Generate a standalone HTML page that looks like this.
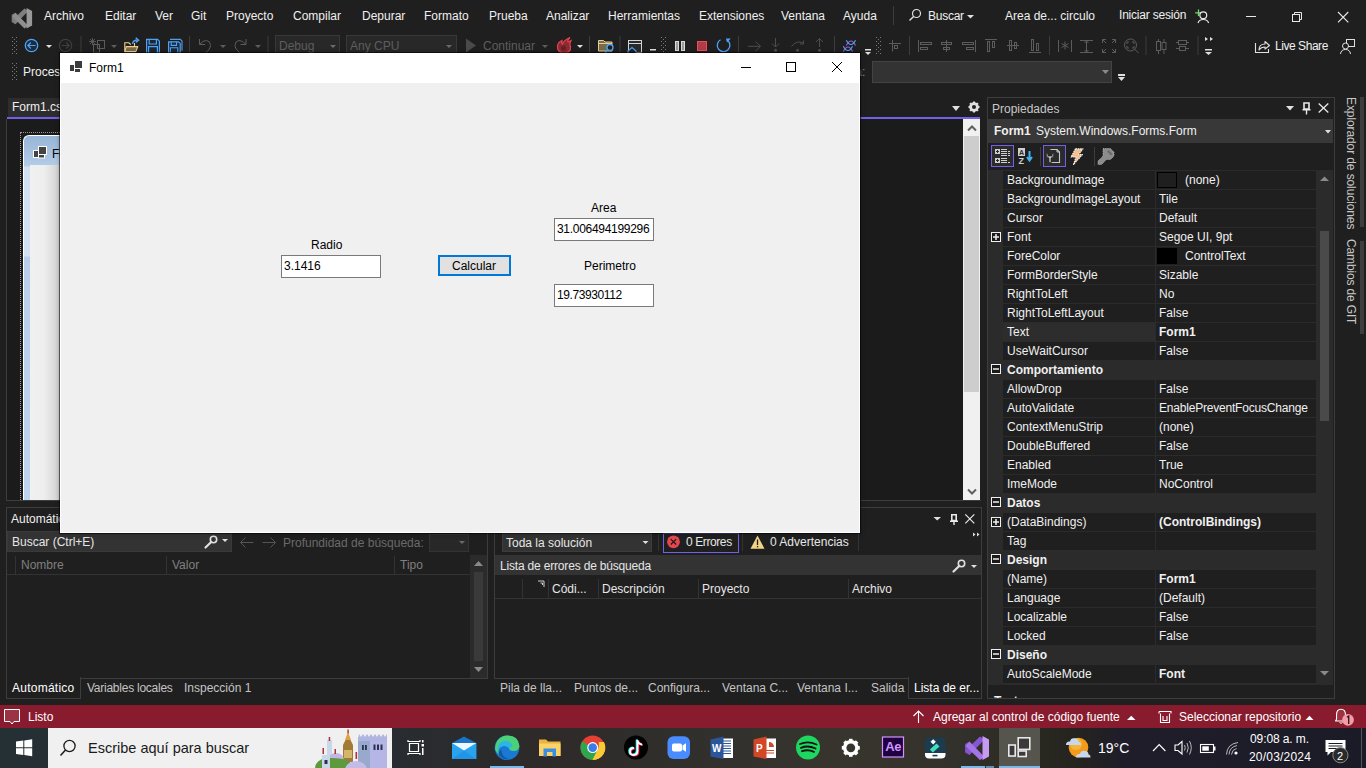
<!DOCTYPE html>
<html><head><meta charset="utf-8">
<style>
*{box-sizing:border-box}
html,body{margin:0;padding:0}
body{width:1366px;height:768px;overflow:hidden;position:relative;background:#1f1f1f;font-family:"Liberation Sans",sans-serif;font-size:12px;color:#f0f0f0}
.a{position:absolute}
.t{position:absolute;white-space:nowrap;font-size:12px;line-height:14px}
.g{color:#6f6f6f}
.sep{position:absolute;width:1px;background:#3d3d3d}
.grip{position:absolute;width:5px;background-image:radial-gradient(circle,#6a6a6a 0.7px,transparent 0.8px);background-size:2.5px 3px}
svg{position:absolute;overflow:visible}
</style></head><body>

<!-- ===== TITLE / MENU BAR ===== -->
<div id="menubar">
<svg style="left:0;top:0" width="40" height="32" viewBox="0 0 40 32"><g transform="translate(11.7,8) scale(0.85) translate(-965,-736)">
<path d="M965 744 L969.5 741.5 V755 L965 752.5 Z" fill="#7c7c7c"/>
<path d="M965.5 750.5 L969.5 755 L984.5 739.5 L980 736.5 Z" fill="#7e7e7e"/>
<path d="M965.5 746 L969.5 741.5 L984.5 757 L980 760 Z" fill="#8e8e8e"/>
<path d="M982.5 736 L989 739.5 V756.5 L982.5 760 Z" fill="#999"/></g></svg>
<div class="t" style="left:44px;top:9px">Archivo</div>
<div class="t" style="left:105px;top:9px">Editar</div>
<div class="t" style="left:155px;top:9px">Ver</div>
<div class="t" style="left:191px;top:9px">Git</div>
<div class="t" style="left:226px;top:9px">Proyecto</div>
<div class="t" style="left:293px;top:9px">Compilar</div>
<div class="t" style="left:362px;top:9px">Depurar</div>
<div class="t" style="left:424px;top:9px">Formato</div>
<div class="t" style="left:489px;top:9px">Prueba</div>
<div class="t" style="left:546px;top:9px">Analizar</div>
<div class="t" style="left:608px;top:9px">Herramientas</div>
<div class="t" style="left:699px;top:9px">Extensiones</div>
<div class="t" style="left:781px;top:9px">Ventana</div>
<div class="t" style="left:843px;top:9px">Ayuda</div>
<div class="sep" style="left:893px;top:6px;height:19px"></div>
<svg style="left:908px;top:8px" width="14" height="14" viewBox="0 0 14 14"><circle cx="8.5" cy="5.5" r="4" fill="none" stroke="#e0e0e0" stroke-width="1.2"/><path d="M5.6 8.4 L1.5 12.5" stroke="#e0e0e0" stroke-width="1.4"/></svg>
<div class="t" style="left:928px;top:9px;letter-spacing:-0.25px">Buscar</div>
<svg style="left:967px;top:15px" width="7" height="4"><path d="M0 0 L7 0 L3.5 3.5Z" fill="#e0e0e0"/></svg>
<div class="t" style="left:1005px;top:9px">Area de... circulo</div>
<div class="t" style="left:1119px;top:8px;letter-spacing:-0.2px">Iniciar sesión</div>
<svg style="left:0;top:0" width="1366" height="32" viewBox="0 0 1366 32"><path d="M1198.5 9.5 V16 M1195.2 12.8 H1201.8" stroke="#6fdc6f" stroke-width="1.3"/><circle cx="1203.3" cy="15.3" r="3.4" fill="#1f1f1f" stroke="#e8e8e8" stroke-width="1.2"/><path d="M1198 23 Q1199 19.5 1203.3 19.5 Q1207.6 19.5 1208.6 23" fill="none" stroke="#e8e8e8" stroke-width="1.2"/><rect x="1246" y="16" width="10" height="1" fill="#e8e8e8"/><rect x="1292.5" y="14.5" width="7" height="7" fill="none" stroke="#e8e8e8"/><path d="M1294.5 14.5 V12.5 H1301.5 V19.5 H1299.5" fill="none" stroke="#e8e8e8"/><path d="M1338 12 L1348.3 22.3 M1348.3 12 L1338 22.3" stroke="#e8e8e8" stroke-width="1.1"/></svg>


</div>

<!-- ===== TOOLBAR 1 ===== -->
<div id="tb1">
<svg style="left:0;top:0" width="1366" height="60" viewBox="0 0 1366 60">

<g transform="translate(12,37)"><g fill="#7a7a7a"><rect x="0" y="0" width="1" height="1"/><rect x="4" y="0" width="1" height="1"/><rect x="2" y="2" width="1" height="1"/><rect x="0" y="4" width="1" height="1"/><rect x="4" y="4" width="1" height="1"/><rect x="2" y="6" width="1" height="1"/><rect x="0" y="8" width="1" height="1"/><rect x="4" y="8" width="1" height="1"/><rect x="2" y="10" width="1" height="1"/><rect x="0" y="12" width="1" height="1"/><rect x="4" y="12" width="1" height="1"/><rect x="2" y="14" width="1" height="1"/><rect x="0" y="16" width="1" height="1"/><rect x="4" y="16" width="1" height="1"/></g></g>
<!-- back -->
<circle cx="31.5" cy="45.5" r="6.2" fill="#1d2b3a" stroke="#4da3f7" stroke-width="1.3"/>
<path d="M35.5 45.5 H28 M30.8 42.5 L27.8 45.5 L30.8 48.5" fill="none" stroke="#4da3f7" stroke-width="1.2"/>
<path d="M46 45 H52 L49 48 Z" fill="#e0e0e0"/>
<circle cx="65.5" cy="45.5" r="6.2" fill="none" stroke="#3e3e3e" stroke-width="1.2"/>
<path d="M61.5 45.5 H69 M66.2 42.5 L69.2 45.5 L66.2 48.5" fill="none" stroke="#3e3e3e" stroke-width="1.2"/>
<rect x="80.5" y="36" width="1" height="17" fill="#3d3d3d"/>
<!-- new project -->
<path d="M92.5 38 V45 M89 41.5 H96 M90 39 L95 44 M95 39 L90 44" stroke="#5c5c5c" stroke-width="0.9"/>
<rect x="97.5" y="40.5" width="7" height="8" fill="none" stroke="#5c5c5c"/>
<rect x="93.5" y="44.5" width="6" height="8" fill="none" stroke="#5c5c5c"/>
<path d="M111 45 H117 L114 48 Z" fill="#5c5c5c"/>
<!-- open folder -->
<path d="M126 47 H137.5 L135.5 51.5 H125 Z" fill="#7b6c4a"/>
<path d="M124.8 52 V42.8 H128.8 L130.3 44.2 H131" fill="none" stroke="#efd18e" stroke-width="1.1"/>
<path d="M124.8 51.6 H135.8 L137.8 46.6 H126.2 L124.8 51.6" fill="none" stroke="#efd18e" stroke-width="1.1" stroke-linejoin="round"/>
<path d="M134.5 43 V46.5" stroke="#efd18e" stroke-width="1.1"/>
<path d="M132.5 43.8 Q133 40.3 137 40" fill="none" stroke="#4da3f7" stroke-width="1.5"/>
<path d="M135.7 37.8 L138.6 40.2 L135.7 42.4" fill="none" stroke="#4da3f7" stroke-width="1.4"/>
<!-- save -->
<path d="M146.6 53 V39.4 H157.6 L159.4 41.2 V53" fill="#1d2633" stroke="#4da3f7" stroke-width="1.2"/>
<path d="M149.2 39.4 V44 H156.4 V39.4" fill="none" stroke="#4da3f7" stroke-width="1.2"/>
<path d="M148.6 53 V46.6 H157.4 V53" fill="#1d2633" stroke="#4da3f7" stroke-width="1.2"/>
<path d="M170 39.4 H180.3 L182 41.1 V50.8" fill="none" stroke="#4e9de8" stroke-width="1.1"/>
<path d="M168.6 53 V41.8 H178.6 L180.2 43.4 V53" fill="#1d2633" stroke="#4da3f7" stroke-width="1.2"/>
<path d="M171.2 41.8 V45.4 H176.6 V41.8" fill="none" stroke="#4da3f7" stroke-width="1.1"/>
<path d="M170.4 53 V47.8 H177.8 V53" fill="#1d2633" stroke="#4da3f7" stroke-width="1.1"/>
<rect x="189" y="36" width="1" height="17" fill="#3d3d3d"/>
<!-- undo -->
<path d="M199.5 39 V44.5 H205 M200 44 Q203 40.5 206.5 40.5 Q210.5 41 210.5 45.5 Q210.5 48 208 50.5 L204.5 54" fill="none" stroke="#5c5c5c" stroke-width="1"/>
<path d="M220 45 H226 L223 48 Z" fill="#5c5c5c"/>
<path d="M246 39 V44.5 H240.5 M245.5 44 Q242.5 40.5 239 40.5 Q235 41 235 45.5 Q235 48 237.5 50.5 L241 54" fill="none" stroke="#5c5c5c" stroke-width="1"/>
<path d="M255 45 H261 L258 48 Z" fill="#5c5c5c"/>
<rect x="267.5" y="36" width="1" height="17" fill="#3d3d3d"/>
<!-- combos -->
<rect x="275.5" y="35.5" width="64" height="22" fill="#282828" stroke="#383838"/>
<text x="279" y="50" font-family="Liberation Sans" font-size="12" fill="#5e5e5e">Debug</text>
<path d="M330 45 H336 L333 48 Z" fill="#6a6a6a"/>
<rect x="346.5" y="35.5" width="110" height="22" fill="#282828" stroke="#383838"/>
<text x="350" y="50" font-family="Liberation Sans" font-size="12" fill="#5e5e5e">Any CPU</text>
<path d="M446 45 H452 L449 48 Z" fill="#6a6a6a"/>
<!-- continue -->
<path d="M466 38.5 L476 45.5 L466 52.5 Z" fill="#4a4a4a"/>
<text x="483" y="50" font-family="Liberation Sans" font-size="12" fill="#5e5e5e">Continuar</text>
<path d="M542 45 H548 L545 48 Z" fill="#5c5c5c"/>
<!-- flame -->
<path d="M563 53 Q557 52 557.5 46 Q558 42 562 40.5 Q561 43 562.5 44 Q564 40 570 37.5 Q567 40.5 568 42 Q569.5 41 571 40.5 Q569 44 570.5 47 Q571 52 565 53 Z" fill="#8c2a33" stroke="#e5434f" stroke-width="1.2"/>
<circle cx="563.5" cy="48" r="2.5" fill="#6a1e26"/>
<path d="M577 45 H583 L580 48 Z" fill="#e0e0e0"/>
<rect x="589" y="36" width="1" height="17" fill="#3d3d3d"/>
<!-- folder magnifier -->
<path d="M598.5 51 V40.5 H603.5 L605 42 H612 V51 Z" fill="#786a4a" stroke="#e9cd8d"/>
<path d="M598.5 43.5 H612" stroke="#e9cd8d"/>
<circle cx="610" cy="47.5" r="3" fill="#1f1f1f" stroke="#4da3f7" stroke-width="1.3"/>
<path d="M608 49.5 L605 53" stroke="#4da3f7" stroke-width="1.4"/>
<rect x="619.5" y="36" width="1" height="17" fill="#3d3d3d"/>
<!-- window icon -->
<rect x="628.5" y="40.5" width="13" height="12" fill="#2a2a2a" stroke="#d4d4d4"/>
<path d="M628.5 43.5 H641.5" stroke="#d4d4d4"/>
<path d="M628 51 L632 47.5 L636 51 V54 H628 Z" fill="#1f1f1f" stroke="#4da3f7" stroke-width="1.2"/>
<rect x="650" y="49" width="6" height="1.5" fill="#e0e0e0"/>
<g transform="translate(661,37)"><g fill="#7a7a7a"><rect x="0" y="0" width="1" height="1"/><rect x="4" y="0" width="1" height="1"/><rect x="2" y="2" width="1" height="1"/><rect x="0" y="4" width="1" height="1"/><rect x="4" y="4" width="1" height="1"/><rect x="2" y="6" width="1" height="1"/><rect x="0" y="8" width="1" height="1"/><rect x="4" y="8" width="1" height="1"/><rect x="2" y="10" width="1" height="1"/><rect x="0" y="12" width="1" height="1"/><rect x="4" y="12" width="1" height="1"/><rect x="2" y="14" width="1" height="1"/><rect x="0" y="16" width="1" height="1"/><rect x="4" y="16" width="1" height="1"/></g></g>
<!-- pause stop restart -->
<rect x="675.5" y="41.5" width="3" height="9" fill="#9a9a9a" stroke="#dcdcdc"/>
<rect x="681.5" y="41.5" width="3" height="9" fill="#9a9a9a" stroke="#dcdcdc"/>
<rect x="697.5" y="41.5" width="9" height="9" fill="#b23b47" stroke="#f04b5a"/>
<path d="M720.5 39.8 A6.3 6.3 0 1 0 727 40" fill="none" stroke="#4da3f7" stroke-width="1.3"/>
<path d="M726 38.5 L730.8 38.5 L727 42.5 Z" fill="#4da3f7"/>
<rect x="738" y="36" width="1" height="17" fill="#3d3d3d"/>
<!-- step -->
<path d="M748 46.3 H760.5 M755.5 41.5 L760.5 46.3 L755.5 51" fill="none" stroke="#4d4d4d" stroke-width="1"/>
<path d="M775.5 38 V47 M772 43.5 L775.5 47 L779 43.5" fill="none" stroke="#4d4d4d" stroke-width="1"/>
<circle cx="775.5" cy="50.3" r="1.5" fill="#4d4d4d"/>
<path d="M791.5 46.5 Q796 40 803 43 M803.5 40.5 V44 H800" fill="none" stroke="#4d4d4d" stroke-width="1"/>
<circle cx="797.5" cy="50.3" r="1.5" fill="#4d4d4d"/>
<path d="M819.5 47 V38.5 M816 42 L819.5 38.5 L823 42" fill="none" stroke="#4d4d4d" stroke-width="1"/>
<circle cx="819.5" cy="50.3" r="1.5" fill="#4d4d4d"/>
<rect x="834" y="36" width="1" height="17" fill="#3d3d3d"/>
<!-- dna -->
<path d="M846.3 45.5 Q851 36.5 855.5 45.5" fill="none" stroke="#a15ad6" stroke-width="1.2"/>
<path d="M846.3 40.2 Q851 48.8 855.5 40.2" fill="none" stroke="#4da3f7" stroke-width="1.2"/>
<path d="M843.3 51.5 Q848 42.5 852.5 51.5" fill="none" stroke="#a15ad6" stroke-width="1.2"/>
<path d="M843.3 46.3 Q848 54.7 852.5 46.3" fill="none" stroke="#4da3f7" stroke-width="1.2"/>
<rect x="865" y="49" width="6" height="1.5" fill="#e0e0e0"/>
<path d="M865 52 H871 L868 55 Z" fill="#e0e0e0"/>
<g transform="translate(876,37)"><g fill="#7a7a7a"><rect x="0" y="0" width="1" height="1"/><rect x="4" y="0" width="1" height="1"/><rect x="2" y="2" width="1" height="1"/><rect x="0" y="4" width="1" height="1"/><rect x="4" y="4" width="1" height="1"/><rect x="2" y="6" width="1" height="1"/><rect x="0" y="8" width="1" height="1"/><rect x="4" y="8" width="1" height="1"/><rect x="2" y="10" width="1" height="1"/><rect x="0" y="12" width="1" height="1"/><rect x="4" y="12" width="1" height="1"/><rect x="2" y="14" width="1" height="1"/><rect x="0" y="16" width="1" height="1"/><rect x="4" y="16" width="1" height="1"/></g></g>
<!-- align icons -->
<g fill="none" stroke="#5c5c5c" stroke-width="1">
<path d="M889 43.5 H901 M892.5 40 V51.5"/><rect x="894.5" y="45.5" width="3" height="3"/>
<path d="M918.5 40 V52"/><rect x="920.5" y="42.5" width="11" height="2"/><rect x="920.5" y="47.5" width="7" height="2"/>
<path d="M946.5 40 V52"/><rect x="941.5" y="42.5" width="10" height="2"/><rect x="943.5" y="47.5" width="6" height="2"/>
<path d="M975.5 40 V52"/><rect x="962.5" y="42.5" width="11" height="2"/><rect x="966.5" y="47.5" width="7" height="2"/>
<path d="M985 39.5 H997"/><rect x="987.5" y="41.5" width="2" height="10"/><rect x="992.5" y="41.5" width="2" height="6"/>
<path d="M1007 45.5 H1019"/><rect x="1009.5" y="40.5" width="2" height="10"/><rect x="1014.5" y="42.5" width="2" height="6"/>
<path d="M1029 52.5 H1041"/><rect x="1031.5" y="39.5" width="2" height="11"/><rect x="1036.5" y="43.5" width="2" height="7"/>
<path d="M1058.5 40 V52 M1071.5 40 V52 M1065 41.5 V49.5 M1061.5 43.5 L1068.5 47.5 M1068.5 43.5 L1061.5 47.5"/>
<path d="M1080 40.5 H1093 M1080 52.5 H1093 M1086.5 41 V52 M1084.5 43 L1086.5 41 L1088.5 43 M1084.5 50 L1086.5 52 L1088.5 50"/>
<path d="M1102.5 43 V39.5 H1106 M1102.5 39.5 L1106 43 M1115.5 43 V39.5 H1112 M1115.5 39.5 L1112 43 M1102.5 49 V52.5 H1106 M1102.5 52.5 L1106 49 M1115.5 49 V52.5 H1112 M1115.5 52.5 L1112 49"/>
<circle cx="1130.5" cy="45" r="6"/><path d="M1134.5 49 L1138.5 53"/>
<path d="M1127 44 V42 H1129 M1132 42 H1134 V44 M1134 46 V48 H1132 M1129 48 H1127 V46"/>
<path d="M1158.5 39 V54 M1164 39 V54"/><rect x="1156.5" y="41.5" width="4" height="9" fill="#1f1f1f"/><rect x="1162" y="42.5" width="4" height="7" fill="#1f1f1f"/>
<path d="M1176 42.5 H1189 M1176 48.5 H1189"/><rect x="1178.5" y="40.5" width="8" height="4" fill="#1f1f1f"/><rect x="1179.5" y="46.5" width="6" height="4" fill="#1f1f1f"/>
</g>
<rect x="1049" y="36" width="1" height="19" fill="#3d3d3d"/>
<rect x="1145.5" y="36" width="1" height="19" fill="#3d3d3d"/>
<rect x="1197.5" y="36" width="1" height="19" fill="#3d3d3d"/>
<rect x="909" y="36" width="1" height="19" fill="#3d3d3d"/>
<path d="M1205 37 L1208 39 L1205 41 Z M1210 37 L1213 39 L1210 41 Z" fill="#e0e0e0"/>
<rect x="1205" y="49" width="7" height="1.5" fill="#e0e0e0"/>
<path d="M1205 52 H1212 L1208.5 55 Z" fill="#e0e0e0"/>
<!-- live share -->
<path d="M1255.5 43 V52.5 H1268.5 V49" fill="none" stroke="#e0e0e0" stroke-width="1.1"/>
<path d="M1259 50 Q1259 44 1265 44 V41.5 L1269.5 45.5 L1265 49 V47 Q1261 47 1259 50 Z" fill="none" stroke="#e0e0e0" stroke-width="1.1" stroke-linejoin="round"/>
<!-- feedback -->
<rect x="1346.5" y="39.5" width="8" height="7" fill="none" stroke="#e0e0e0"/>
<circle cx="1345.5" cy="46" r="3" fill="#1f1f1f" stroke="#e0e0e0"/>
<path d="M1340.5 54 Q1341 49.5 1345.5 49.5 Q1350 49.5 1350.5 54" fill="none" stroke="#e0e0e0"/>
</svg>
<div class="t" style="left:1275px;top:39px;font-size:12px;letter-spacing:-0.45px">Live Share</div>
</div>

<!-- ===== TOOLBAR 2 ===== -->
<div id="tb2">
<svg style="left:0;top:0" width="30" height="90"><g transform="translate(12,63)"><g fill="#7a7a7a"><rect x="0" y="0" width="1" height="1"/><rect x="4" y="0" width="1" height="1"/><rect x="2" y="2" width="1" height="1"/><rect x="0" y="4" width="1" height="1"/><rect x="4" y="4" width="1" height="1"/><rect x="2" y="6" width="1" height="1"/><rect x="0" y="8" width="1" height="1"/><rect x="4" y="8" width="1" height="1"/><rect x="2" y="10" width="1" height="1"/><rect x="0" y="12" width="1" height="1"/><rect x="4" y="12" width="1" height="1"/><rect x="2" y="14" width="1" height="1"/><rect x="0" y="16" width="1" height="1"/><rect x="4" y="16" width="1" height="1"/></g></g></svg>
<div class="t" style="left:23px;top:65px">Proceso:</div>
<div class="t" style="left:790px;top:65px;color:#8a8a8a">Marco de pila:</div>
<div class="a" style="left:872px;top:61px;width:240px;height:22px;background:#333333;border:1px solid #434343"></div>
<svg style="left:1102px;top:70px" width="7" height="4"><path d="M0 0 L7 0 L3.5 4Z" fill="#8a8a8a"/></svg>
<div class="a" style="left:1118px;top:74px;width:7px;height:1.5px;background:#e0e0e0"></div>
<svg style="left:1118px;top:77px" width="7" height="4"><path d="M0 0 L7 0 L3.5 4Z" fill="#e0e0e0"/></svg>
</div>

<!-- ===== DOCUMENT WELL ===== -->
<div id="docwell">
<div class="a" style="left:8px;top:98px;width:56px;height:19px;background:#2d2d2d"></div>
<div class="t" style="left:12px;top:100px">Form1.cs [Diseño]</div>
<div class="a" style="left:7px;top:117px;width:973px;height:2px;background:#7160e8"></div>
<svg style="left:952px;top:106px" width="8" height="5"><path d="M0 0 L8 0 L4 5Z" fill="#e0e0e0"/></svg>
<svg style="left:968px;top:101px" width="12" height="12" viewBox="0 0 12 12"><g transform="translate(6,6)"><circle r="3.6" fill="none" stroke="#e0e0e0" stroke-width="2.4"/><g fill="#e0e0e0"><rect x="-1" y="-5.5" width="2" height="11"/><rect x="-5.5" y="-1" width="11" height="2"/><rect x="-1" y="-5.5" width="2" height="11" transform="rotate(45)"/><rect x="-1" y="-5.5" width="2" height="11" transform="rotate(-45)"/></g><circle r="2" fill="#1f1f1f"/></g></svg>
<div class="a" style="left:6px;top:119px;width:1px;height:381px;background:#3d3d3d"></div>
<div class="a" style="left:7px;top:119px;width:956px;height:381px;background:#1b1b1b"></div>
<div class="a" style="left:6px;top:500px;width:975px;height:1px;background:#3d3d3d"></div>
<!-- designer scrollbar -->
<div class="a" style="left:963px;top:119px;width:17px;height:381px;background:#f0f0f0"></div>
<div class="a" style="left:964px;top:136px;width:15px;height:256px;background:#cdcdcd"></div>
<svg style="left:967px;top:125px" width="10" height="7"><path d="M1 5.5 L5 1.5 L9 5.5" fill="none" stroke="#606060" stroke-width="2"/></svg>
<svg style="left:967px;top:488px" width="10" height="7"><path d="M1 1.5 L5 5.5 L9 1.5" fill="none" stroke="#606060" stroke-width="2"/></svg>
<!-- designer form -->
<div class="a" style="left:20px;top:132px;width:50px;height:368px;border-left:1px dotted #9a9a9a;border-top:1px dotted #9a9a9a"></div>
<div class="a" style="left:23px;top:135px;width:50px;height:365px;border-radius:6px 0 0 0;background:linear-gradient(#98b5d6 0px,#b3cde8 30px,#d3e2f3 31px,#d3e2f3 120px,#b7cfea 121px,#bdd4ec 100%);border-left:1px solid #fff;border-top:1px solid #fff"></div>
<div class="a" style="left:30px;top:165px;width:40px;height:335px;background:linear-gradient(90deg,#f0f0f0 0px,#eeeeee 14px,#d2d2d2 29px,#d2d2d2 40px)"></div>
<svg style="left:33px;top:145px" width="15" height="14" viewBox="0 0 15 14"><rect x="5.5" y="1.5" width="8" height="8" fill="#444" stroke="#fff"/><rect x="0.5" y="5.5" width="5" height="7" fill="#444" stroke="#fff"/><rect x="5.5" y="9.5" width="6" height="3.5" fill="#444" stroke="#fff"/></svg>
<div class="t" style="left:52px;top:147px;color:#000">Form1</div>
</div>

<!-- ===== PROPERTIES ===== -->
<div id="props">
<div class="a" style="left:987px;top:97px;width:348px;height:602px;border:1px solid #3d3d3d;background:#1f1f1f"></div>
<div class="t" style="left:992px;top:102px;color:#c8c8c8">Propiedades</div>
<svg style="left:1286px;top:106px" width="8" height="5"><path d="M0 0 H8 L4 4.5Z" fill="#e0e0e0"/></svg>
<svg style="left:1302px;top:102px" width="9" height="13" viewBox="0 0 9 13"><path d="M2 1 H7 V7 H2 Z" fill="none" stroke="#e8e8e8" stroke-width="1.6"/><rect x="0.5" y="7" width="8" height="1.5" fill="#e8e8e8"/><rect x="3.8" y="8" width="1.4" height="4.5" fill="#e8e8e8"/></svg>
<svg style="left:1318px;top:103px" width="11" height="10" viewBox="0 0 11 10"><path d="M0.7 0.5 L10.3 9.5 M10.3 0.5 L0.7 9.5" stroke="#e8e8e8" stroke-width="1.3"/></svg>
<div class="a" style="left:988px;top:119px;width:345px;height:24px;background:#383838"></div>
<div class="t" style="left:994px;top:124px;font-weight:bold">Form1</div>
<div class="t" style="left:1036px;top:124px">System.Windows.Forms.Form</div>
<svg style="left:1325px;top:130px" width="6" height="4"><path d="M0 0 H6 L3 3.5Z" fill="#e0e0e0"/></svg>
<svg style="left:0;top:0" width="1366" height="200" viewBox="0 0 1366 200">
<rect x="991.5" y="145.5" width="22" height="21" fill="#2b2b2b" stroke="#7160e8"/>
<rect x="1043.5" y="145.5" width="22" height="21" fill="#2b2b2b" stroke="#7160e8"/>
<g fill="#cfcfcf">
<rect x="995" y="149" width="5" height="5"/><rect x="995" y="158" width="5" height="5"/>
<rect x="1001" y="149" width="6" height="1"/><rect x="1001" y="151" width="6" height="1"/><rect x="1001" y="153" width="6" height="1"/><rect x="1001" y="155" width="6" height="1"/>
<rect x="1001" y="158" width="6" height="1"/><rect x="1001" y="160" width="6" height="1"/><rect x="1001" y="162" width="6" height="1"/>
<rect x="1008" y="151" width="2" height="1"/><rect x="1008" y="153" width="2" height="1"/><rect x="1008" y="155" width="2" height="1"/><rect x="1008" y="162" width="2" height="1"/>
<rect x="1018" y="148" width="7" height="8"/>
</g>
<path d="M996 151.5 H999 M997.5 150 V153 M996 160.5 H999 M997.5 159 V162" stroke="#2b2b2b" stroke-width="1"/>
<text x="1019" y="155" font-family="Liberation Sans" font-size="7" font-weight="bold" fill="#2b2b2b">A</text>
<text x="1018.5" y="164" font-family="Liberation Sans" font-size="9" font-weight="bold" fill="#cfcfcf">Z</text>
<path d="M1029.5 151 V160 M1027 157 L1029.5 160.5 L1032 157" fill="none" stroke="#3fb3f2" stroke-width="2"/>
<rect x="1040" y="147" width="1" height="19" fill="#3d3d3d"/>
<rect x="1094" y="147" width="1" height="19" fill="#3d3d3d"/>
<path d="M1050.5 149.5 H1057 L1059.5 152 V162.5 H1051.5" fill="none" stroke="#c8c8c8" stroke-width="1.1"/>
<path d="M1057 149.5 V152 H1059.5" fill="none" stroke="#c8c8c8" stroke-width="1"/>
<path d="M1046.3 153 Q1046 157.5 1049 158 V162.5 H1051 V158 Q1054 157.5 1053.7 153 L1052 154.5 V156 H1048 V154.5 Z" fill="#c8c8c8" stroke="#1f1f1f" stroke-width="0.6"/>
<path d="M1075.5 148.8 H1083 L1078.5 154.5 H1082.5 L1073.5 164.5 L1076 157 H1071 Z" fill="#f5c08d" stroke="#f4f4f4" stroke-width="1.1" stroke-linejoin="round" stroke-dasharray="1.5 0.8"/>
<path d="M1103 148.5 H1110.5 L1114 152 V156 L1110.5 159.5 H1106.5 L1101.5 164.5 H1098 V161 L1103 156 V148.5 Z" fill="#8c8c8c" stroke="#bdbdbd" stroke-width="0.7" stroke-dasharray="1 0.8"/>
<path d="M1108.5 150 L1112.5 154 L1111 155.5 L1107 151.5 Z" fill="#6a6a6a"/>
</svg>
<div class="a" style="left:988px;top:170px;width:345px;height:514px;background:#2b2b2b"></div>
<div class="a" style="left:988px;top:684px;width:345px;height:14px;background:#1f1f1f;border-top:1px solid #2b2b2b;overflow:hidden"><div class="t" style="left:6px;top:9px;font-weight:bold">Texto</div></div>
<div class="a" style="left:1317px;top:170px;width:16px;height:514px;background:#2b2b2b"></div>
<div class="a" style="left:1003px;top:171px;width:152px;height:18px;background:#1f1f1f"></div>
<div class="a" style="left:1156px;top:171px;width:160px;height:18px;background:#1f1f1f"></div>
<div class="t" style="left:1007px;top:173px">BackgroundImage</div>
<div class="a" style="left:1157px;top:172px;width:20px;height:16px;border:1px solid #000;background:#1f1f1f"></div>
<div class="t" style="left:1185px;top:173px;">(none)</div>
<div class="a" style="left:1003px;top:190px;width:152px;height:18px;background:#1f1f1f"></div>
<div class="a" style="left:1156px;top:190px;width:160px;height:18px;background:#1f1f1f"></div>
<div class="t" style="left:1007px;top:192px">BackgroundImageLayout</div>
<div class="t" style="left:1159px;top:192px;">Tile</div>
<div class="a" style="left:1003px;top:209px;width:152px;height:18px;background:#1f1f1f"></div>
<div class="a" style="left:1156px;top:209px;width:160px;height:18px;background:#1f1f1f"></div>
<div class="t" style="left:1007px;top:211px">Cursor</div>
<div class="t" style="left:1159px;top:211px;">Default</div>
<div class="a" style="left:1003px;top:228px;width:152px;height:18px;background:#1f1f1f"></div>
<div class="a" style="left:1156px;top:228px;width:160px;height:18px;background:#1f1f1f"></div>
<svg style="left:991px;top:232px" width="10" height="10" viewBox="0 0 10 10"><rect x="0.5" y="0.5" width="9" height="9" fill="#1a1a1a" stroke="#f0f0f0"/><rect x="2" y="4.25" width="6" height="1.5" fill="#f0f0f0"/><rect x="4.25" y="2" width="1.5" height="6" fill="#f0f0f0"/></svg>
<div class="t" style="left:1007px;top:230px">Font</div>
<div class="t" style="left:1159px;top:230px;">Segoe UI, 9pt</div>
<div class="a" style="left:1003px;top:247px;width:152px;height:18px;background:#1f1f1f"></div>
<div class="a" style="left:1156px;top:247px;width:160px;height:18px;background:#1f1f1f"></div>
<div class="t" style="left:1007px;top:249px">ForeColor</div>
<div class="a" style="left:1157px;top:248px;width:20px;height:16px;border:1px solid #000;background:#000"></div>
<div class="t" style="left:1185px;top:249px;">ControlText</div>
<div class="a" style="left:1003px;top:266px;width:152px;height:18px;background:#1f1f1f"></div>
<div class="a" style="left:1156px;top:266px;width:160px;height:18px;background:#1f1f1f"></div>
<div class="t" style="left:1007px;top:268px">FormBorderStyle</div>
<div class="t" style="left:1159px;top:268px;">Sizable</div>
<div class="a" style="left:1003px;top:285px;width:152px;height:18px;background:#1f1f1f"></div>
<div class="a" style="left:1156px;top:285px;width:160px;height:18px;background:#1f1f1f"></div>
<div class="t" style="left:1007px;top:287px">RightToLeft</div>
<div class="t" style="left:1159px;top:287px;">No</div>
<div class="a" style="left:1003px;top:304px;width:152px;height:18px;background:#1f1f1f"></div>
<div class="a" style="left:1156px;top:304px;width:160px;height:18px;background:#1f1f1f"></div>
<div class="t" style="left:1007px;top:306px">RightToLeftLayout</div>
<div class="t" style="left:1159px;top:306px;">False</div>
<div class="a" style="left:1003px;top:323px;width:152px;height:18px;background:#2d2d2d"></div>
<div class="a" style="left:1156px;top:323px;width:160px;height:18px;background:#1f1f1f"></div>
<div class="t" style="left:1007px;top:325px">Text</div>
<div class="t" style="left:1159px;top:325px;font-weight:bold;">Form1</div>
<div class="a" style="left:1003px;top:342px;width:152px;height:18px;background:#1f1f1f"></div>
<div class="a" style="left:1156px;top:342px;width:160px;height:18px;background:#1f1f1f"></div>
<div class="t" style="left:1007px;top:344px">UseWaitCursor</div>
<div class="t" style="left:1159px;top:344px;">False</div>
<svg style="left:991px;top:364px" width="10" height="10" viewBox="0 0 10 10"><rect x="0.5" y="0.5" width="9" height="9" fill="#1a1a1a" stroke="#f0f0f0"/><rect x="2" y="4.25" width="6" height="1.5" fill="#f0f0f0"/></svg>
<div class="t" style="left:1007px;top:363px;font-weight:bold">Comportamiento</div>
<div class="a" style="left:1003px;top:380px;width:152px;height:18px;background:#1f1f1f"></div>
<div class="a" style="left:1156px;top:380px;width:160px;height:18px;background:#1f1f1f"></div>
<div class="t" style="left:1007px;top:382px">AllowDrop</div>
<div class="t" style="left:1159px;top:382px;">False</div>
<div class="a" style="left:1003px;top:399px;width:152px;height:18px;background:#1f1f1f"></div>
<div class="a" style="left:1156px;top:399px;width:160px;height:18px;background:#1f1f1f"></div>
<div class="t" style="left:1007px;top:401px">AutoValidate</div>
<div class="t" style="left:1159px;top:401px;"><span style="letter-spacing:-0.2px">EnablePreventFocusChange</span></div>
<div class="a" style="left:1003px;top:418px;width:152px;height:18px;background:#1f1f1f"></div>
<div class="a" style="left:1156px;top:418px;width:160px;height:18px;background:#1f1f1f"></div>
<div class="t" style="left:1007px;top:420px">ContextMenuStrip</div>
<div class="t" style="left:1159px;top:420px;">(none)</div>
<div class="a" style="left:1003px;top:437px;width:152px;height:18px;background:#1f1f1f"></div>
<div class="a" style="left:1156px;top:437px;width:160px;height:18px;background:#1f1f1f"></div>
<div class="t" style="left:1007px;top:439px">DoubleBuffered</div>
<div class="t" style="left:1159px;top:439px;">False</div>
<div class="a" style="left:1003px;top:456px;width:152px;height:18px;background:#1f1f1f"></div>
<div class="a" style="left:1156px;top:456px;width:160px;height:18px;background:#1f1f1f"></div>
<div class="t" style="left:1007px;top:458px">Enabled</div>
<div class="t" style="left:1159px;top:458px;">True</div>
<div class="a" style="left:1003px;top:475px;width:152px;height:18px;background:#1f1f1f"></div>
<div class="a" style="left:1156px;top:475px;width:160px;height:18px;background:#1f1f1f"></div>
<div class="t" style="left:1007px;top:477px">ImeMode</div>
<div class="t" style="left:1159px;top:477px;">NoControl</div>
<svg style="left:991px;top:497px" width="10" height="10" viewBox="0 0 10 10"><rect x="0.5" y="0.5" width="9" height="9" fill="#1a1a1a" stroke="#f0f0f0"/><rect x="2" y="4.25" width="6" height="1.5" fill="#f0f0f0"/></svg>
<div class="t" style="left:1007px;top:496px;font-weight:bold">Datos</div>
<div class="a" style="left:1003px;top:513px;width:152px;height:18px;background:#1f1f1f"></div>
<div class="a" style="left:1156px;top:513px;width:160px;height:18px;background:#1f1f1f"></div>
<svg style="left:991px;top:517px" width="10" height="10" viewBox="0 0 10 10"><rect x="0.5" y="0.5" width="9" height="9" fill="#1a1a1a" stroke="#f0f0f0"/><rect x="2" y="4.25" width="6" height="1.5" fill="#f0f0f0"/><rect x="4.25" y="2" width="1.5" height="6" fill="#f0f0f0"/></svg>
<div class="t" style="left:1007px;top:515px">(DataBindings)</div>
<div class="t" style="left:1159px;top:515px;font-weight:bold;">(ControlBindings)</div>
<div class="a" style="left:1003px;top:532px;width:152px;height:18px;background:#1f1f1f"></div>
<div class="a" style="left:1156px;top:532px;width:160px;height:18px;background:#1f1f1f"></div>
<div class="t" style="left:1007px;top:534px">Tag</div>
<svg style="left:991px;top:554px" width="10" height="10" viewBox="0 0 10 10"><rect x="0.5" y="0.5" width="9" height="9" fill="#1a1a1a" stroke="#f0f0f0"/><rect x="2" y="4.25" width="6" height="1.5" fill="#f0f0f0"/></svg>
<div class="t" style="left:1007px;top:553px;font-weight:bold">Design</div>
<div class="a" style="left:1003px;top:570px;width:152px;height:18px;background:#1f1f1f"></div>
<div class="a" style="left:1156px;top:570px;width:160px;height:18px;background:#1f1f1f"></div>
<div class="t" style="left:1007px;top:572px">(Name)</div>
<div class="t" style="left:1159px;top:572px;font-weight:bold;">Form1</div>
<div class="a" style="left:1003px;top:589px;width:152px;height:18px;background:#1f1f1f"></div>
<div class="a" style="left:1156px;top:589px;width:160px;height:18px;background:#1f1f1f"></div>
<div class="t" style="left:1007px;top:591px">Language</div>
<div class="t" style="left:1159px;top:591px;">(Default)</div>
<div class="a" style="left:1003px;top:608px;width:152px;height:18px;background:#1f1f1f"></div>
<div class="a" style="left:1156px;top:608px;width:160px;height:18px;background:#1f1f1f"></div>
<div class="t" style="left:1007px;top:610px">Localizable</div>
<div class="t" style="left:1159px;top:610px;">False</div>
<div class="a" style="left:1003px;top:627px;width:152px;height:18px;background:#1f1f1f"></div>
<div class="a" style="left:1156px;top:627px;width:160px;height:18px;background:#1f1f1f"></div>
<div class="t" style="left:1007px;top:629px">Locked</div>
<div class="t" style="left:1159px;top:629px;">False</div>
<svg style="left:991px;top:649px" width="10" height="10" viewBox="0 0 10 10"><rect x="0.5" y="0.5" width="9" height="9" fill="#1a1a1a" stroke="#f0f0f0"/><rect x="2" y="4.25" width="6" height="1.5" fill="#f0f0f0"/></svg>
<div class="t" style="left:1007px;top:648px;font-weight:bold">Diseño</div>
<div class="a" style="left:1003px;top:665px;width:152px;height:18px;background:#1f1f1f"></div>
<div class="a" style="left:1156px;top:665px;width:160px;height:18px;background:#1f1f1f"></div>
<div class="t" style="left:1007px;top:667px">AutoScaleMode</div>
<div class="t" style="left:1159px;top:667px;font-weight:bold;">Font</div>
<svg style="left:1320px;top:671px" width="9" height="5"><path d="M0 0 H9 L4.5 4.5Z" fill="#8a8a8a"/></svg>
<svg style="left:1320px;top:176px" width="9" height="5"><path d="M0 5 H9 L4.5 0.5Z" fill="#8a8a8a"/></svg>
<div class="a" style="left:1320px;top:231px;width:9px;height:190px;background:#4a4a4a"></div>
</div>

<!-- ===== BOTTOM LEFT ===== -->
<div id="autos">
<!-- autos panel -->
<div class="a" style="left:6px;top:507px;width:482px;height:172px;border:1px solid #3d3d3d;background:#1f1f1f"></div>
<div class="t" style="left:11px;top:512px">Automático</div>
<div class="a" style="left:7px;top:531px;width:225px;height:21px;background:#333333;border:1px solid #3a3a3a"></div>
<div class="t" style="left:12px;top:535px;color:#e6e6e6">Buscar (Ctrl+E)</div>
<svg style="left:0;top:0" width="1366" height="768" viewBox="0 0 1366 768">
<circle cx="213.5" cy="539.5" r="3.2" fill="none" stroke="#e0e0e0" stroke-width="1.6"/>
<path d="M211.2 542 L205.5 547.5" stroke="#e0e0e0" stroke-width="2.2" stroke-linecap="round"/>
<path d="M222 539 H228 L225 542Z" fill="#e0e0e0"/>
<path d="M240.5 542.5 H253.5 M245.5 537.5 L240.5 542.5 L245.5 547.5" fill="none" stroke="#555" stroke-width="1"/>
<path d="M262.5 542.5 H275.5 M270.5 537.5 L275.5 542.5 L270.5 547.5" fill="none" stroke="#555" stroke-width="1"/>
<rect x="429.5" y="534.5" width="39" height="17" fill="#282828" stroke="#333"/>
<path d="M459 541 H465 L462 544Z" fill="#6a6a6a"/>
<!-- header -->
<path d="M7 574.5 H470" stroke="#333" stroke-width="1"/>
<path d="M15.5 556 V574 M166.5 556 V574 M394.5 556 V574" stroke="#333" stroke-width="1"/>
<!-- scroll -->
<rect x="470" y="555" width="17" height="123" fill="#2b2b2b"/>
<path d="M474 566 H483 L478.5 561Z" fill="#8a8a8a"/>
<rect x="474" y="572" width="9" height="89" fill="#3a3a3a"/>
<path d="M474 667 H483 L478.5 672Z" fill="#8a8a8a"/>
</svg>
<div class="t" style="left:21px;top:558px;color:#7f7f7f">Nombre</div>
<div class="t" style="left:172px;top:558px;color:#7f7f7f">Valor</div>
<div class="t" style="left:400px;top:558px;color:#7f7f7f">Tipo</div>
<div class="a" style="left:6px;top:677px;width:75px;height:22px;border:1px solid #3d3d3d;border-top:none;background:#1f1f1f"></div>
<div class="t" style="left:12px;top:681px;color:#fff;letter-spacing:0.25px">Automático</div>
<div class="t" style="left:87px;top:681px;color:#c4c4c4;letter-spacing:-0.25px">Variables locales</div>
<div class="t" style="left:184px;top:681px;color:#c4c4c4">Inspección 1</div>
<div class="a" style="left:7px;top:677px;width:73px;height:1px;background:#1f1f1f"></div>
<div class="t" style="left:87px;top:548px;color:#6f6f6f;display:none"></div>
<div class="t" style="left:283px;top:536px;color:#6a6a6a">Profundidad de búsqueda:</div>

<!-- errors panel -->
<div class="a" style="left:494px;top:507px;width:488px;height:172px;border:1px solid #3d3d3d;background:#1f1f1f"></div>
<div class="a" style="left:502px;top:533px;width:150px;height:19px;background:#333333;border:1px solid #3d3d3d"></div>
<div class="t" style="left:506px;top:536px;color:#e6e6e6">Toda la solución</div>
<svg style="left:0;top:0" width="1366" height="768" viewBox="0 0 1366 768">
<path d="M642.5 541 H648.5 L645.5 544Z" fill="#e0e0e0"/>
<path d="M658.5 533 V551 M742.5 533 V551 M858.5 533 V551" stroke="#333" stroke-width="1"/>
<rect x="663.5" y="533.5" width="75" height="19" fill="none" stroke="#7160e8"/>
<circle cx="673.5" cy="541.8" r="6.4" fill="#e5464f"/>
<path d="M670.8 539.1 L676.2 544.5 M676.2 539.1 L670.8 544.5" stroke="#1a1a1a" stroke-width="1.2"/>
<path d="M757.5 535.5 L764.5 548.8 H750.5Z" fill="#f2d487"/>
<path d="M757.5 539.5 V545" stroke="#1a1a1a" stroke-width="1.3"/><rect x="756.9" y="546" width="1.3" height="1.3" fill="#1a1a1a"/>
<path d="M933.5 517 H941 L937.2 520.5Z" fill="#e0e0e0"/>
<path d="M951.8 514.8 H956.2 V520.5 H951.8Z" fill="none" stroke="#e8e8e8" stroke-width="1.6"/><rect x="950" y="520.5" width="8" height="1.5" fill="#e8e8e8"/><rect x="953.3" y="521" width="1.4" height="4" fill="#e8e8e8"/>
<path d="M965.3 514.3 L974.3 523.3 M974.3 514.3 L965.3 523.3" stroke="#e8e8e8" stroke-width="1.2"/>
<path d="M973 532.5 L975.5 534.5 L973 536.5Z M977 532.5 L979.5 534.5 L977 536.5Z" fill="#e0e0e0"/>
<rect x="495" y="555" width="486" height="20" fill="#333333"/>
<circle cx="961.5" cy="563.5" r="3.2" fill="none" stroke="#e0e0e0" stroke-width="1.6"/>
<path d="M959.2 566 L953.5 571.5" stroke="#e0e0e0" stroke-width="2.2" stroke-linecap="round"/>
<path d="M971 565 H977 L974 568Z" fill="#e0e0e0"/>
<path d="M495 598.5 H981" stroke="#333" stroke-width="1"/>
<path d="M522.5 579 V598 M548.5 579 V598 M598.5 579 V598 M698.5 579 V598 M848.5 579 V598" stroke="#333" stroke-width="1"/>
<path d="M538 581 H544 V587 M540.5 583 H542.5 V585" fill="none" stroke="#cfcfcf" stroke-width="1"/>
</svg>
<div class="t" style="left:686px;top:535px;color:#e6e6e6;letter-spacing:-0.4px">0 Errores</div>
<div class="t" style="left:770px;top:535px;color:#e6e6e6">0 Advertencias</div>
<div class="t" style="left:500px;top:559px;color:#e6e6e6;letter-spacing:-0.18px">Lista de errores de búsqueda</div>
<div class="t" style="left:552px;top:582px;color:#e6e6e6">Códi...</div>
<div class="t" style="left:602px;top:582px;color:#e6e6e6">Descripción</div>
<div class="t" style="left:702px;top:582px;color:#e6e6e6">Proyecto</div>
<div class="t" style="left:852px;top:582px;color:#e6e6e6">Archivo</div>
<div class="a" style="left:908px;top:677px;width:74px;height:22px;border:1px solid #3d3d3d;border-top:none;background:#1f1f1f"></div>
<div class="a" style="left:909px;top:677px;width:72px;height:1px;background:#1f1f1f"></div>
<div class="t" style="left:500px;top:681px;color:#c4c4c4">Pila de lla...</div>
<div class="t" style="left:574px;top:681px;color:#c4c4c4">Puntos de...</div>
<div class="t" style="left:648px;top:681px;color:#c4c4c4">Configura...</div>
<div class="t" style="left:722px;top:681px;color:#c4c4c4">Ventana C...</div>
<div class="t" style="left:797px;top:681px;color:#c4c4c4">Ventana I...</div>
<div class="t" style="left:871px;top:681px;color:#c4c4c4">Salida</div>
<div class="t" style="left:914px;top:681px;color:#fff">Lista de er...</div>

<!-- right vertical tabs -->
<div class="a" style="left:1360px;top:97px;width:4px;height:130px;background:#3d3d3d"></div>
<div class="a" style="left:1360px;top:241px;width:4px;height:93px;background:#3d3d3d"></div>
<div class="t" style="left:1344px;top:97px;color:#c8c8c8;letter-spacing:-0.1px;transform-origin:0 0;transform:rotate(90deg) translate(0,-14px)">Explorador de soluciones</div>
<div class="t" style="left:1344px;top:239px;color:#c8c8c8;letter-spacing:-0.15px;transform-origin:0 0;transform:rotate(90deg) translate(0,-14px)">Cambios de GIT</div>

</div>

<!-- ===== BOTTOM RIGHT ===== -->
<div id="errors"></div>

<!-- ===== STATUS BAR ===== -->
<div id="status">
<div class="a" style="left:0;top:705px;width:1366px;height:23px;background:#881c2e"></div>
<svg style="left:0;top:0" width="1366" height="768" viewBox="0 0 1366 768">
<path d="M4.5 709.5 H19.5 V721.5 H14 L12 724 L10 721.5 H4.5 Z" fill="#9a3444" stroke="#fff" stroke-width="1"/>
<path d="M918.5 723 V711 M913.5 716 L918.5 711 L923.5 716" fill="none" stroke="#fff" stroke-width="1.1"/>
<path d="M1127 720 H1135.5 L1131.25 715.8Z" fill="#fff"/>
<path d="M1159 711.5 H1171 V713.5 M1159 711.5 V713.5 M1160.5 713.5 V722.5 H1169.5 V713.5 M1163 716 V720.5 H1167 V716" fill="none" stroke="#fff" stroke-width="1.1"/>
<path d="M1305.5 720 H1313.5 L1309.5 715.8Z" fill="#fff"/>
<path d="M1335.5 721 Q1337 720 1336.5 715 Q1336.5 709.2 1341 709.2 Q1345.5 709.2 1345.5 715 Q1345 720 1347 721 Z" fill="#9c3343" stroke="#fff" stroke-width="1.1" stroke-linejoin="round"/>
<path d="M1339.5 722.5 Q1341 724 1342.5 722.5" fill="none" stroke="#fff" stroke-width="1"/>
<circle cx="1348" cy="719.8" r="5.9" fill="#f79aa3"/>
<path d="M1347 717.2 L1348.7 716 V724" fill="none" stroke="#1a1a3a" stroke-width="1.3"/>
</svg>
<div class="t" style="left:28px;top:710px;color:#fff">Listo</div>
<div class="t" style="left:933px;top:710px;color:#fff">Agregar al control de código fuente</div>
<div class="t" style="left:1179px;top:710px;color:#fff">Seleccionar repositorio</div>


</div>

<!-- ===== TASKBAR ===== -->
<div id="taskbar">
<div class="a" style="left:0;top:728px;width:1366px;height:40px;background:linear-gradient(90deg,#253034 0%,#282c30 29%,#2e2a29 40%,#302f2c 50%,#38352e 62%,#33312b 70%,#292820 76%,#25231f 79%,#1f1d29 82%,#1b1b28 100%)"></div>
<svg style="left:0;top:0" width="1366" height="768" viewBox="0 0 1366 768">
<!-- windows logo -->
<path d="M16 741.5 L23.3 740.5 V747.3 H16 Z M24.3 740.4 L32.2 739.3 V747.3 H24.3 Z M16 748.3 H23.3 V755 L16 754 Z M24.3 748.3 H32.2 V756.2 L24.3 755.1 Z" fill="#fff"/>
</svg>
<div class="a" style="left:48px;top:728px;width:344px;height:40px;background:#f0f0f0"></div>
<svg style="left:0;top:0" width="1366" height="768" viewBox="0 0 1366 768">
<circle cx="69.5" cy="746" r="5.6" fill="none" stroke="#1a1a1a" stroke-width="1.3"/>
<path d="M65.5 750 L60.5 755.5" stroke="#1a1a1a" stroke-width="1.5"/>
<!-- illustration -->
<path d="M358 768 V737 H387 V768 Z" fill="#b6b6e6"/>
<path d="M358 768 V737 H370 V768 Z" fill="#98a9cb"/>
<path d="M358 741 L359 734 L361 737 L363 734 L365 737 L367 734 L369 737 L371 734 L373 737 L375 734 L377 737 L379 734 L381 737 L383 734 L385 737 L387 734 V741Z" fill="#b0b4e0"/>
<rect x="362" y="745" width="1.8" height="5" fill="#2a3050"/><rect x="365" y="745" width="1.8" height="5" fill="#2a3050"/>
<rect x="373.5" y="744.5" width="2" height="5.5" fill="#2a3050"/><rect x="377" y="744.5" width="2" height="5.5" fill="#2a3050"/><rect x="380.5" y="744.5" width="2" height="5.5" fill="#2a3050"/>
<path d="M343 762 V745 L345.5 740 H350.5 L353 745 V762Z" fill="#a27a36"/>
<path d="M345 740 L348 732 L351 740Z" fill="#e0a040"/>
<rect x="347.4" y="729.5" width="1.4" height="4" fill="#b03040"/>
<rect x="344" y="750" width="8" height="8" fill="#e8d080" opacity="0.7"/>
<rect x="327" y="740" width="5" height="20" fill="#c8d8e8"/>
<rect x="328.7" y="737" width="1.5" height="4" fill="#b03040"/>
<ellipse cx="336" cy="760" rx="8" ry="7" fill="#c2b6e6"/>
<rect x="334.5" y="749" width="1.5" height="5" fill="#b03040"/>
<path d="M315 768 Q316 758 330 758 Q346 758 350 762 L350 768Z" fill="#5c9a3c"/>
<path d="M322 768 V755 H330 V768Z" fill="#c8d8e8"/>
<rect x="322.5" y="748" width="1.5" height="6" fill="#b03040"/>
<rect x="324.5" y="760" width="3" height="4" fill="#2a3050"/>
<ellipse cx="356" cy="770" rx="11" ry="9" fill="#c4bce8"/>
<rect x="355.5" y="752" width="1.6" height="7" fill="#b03040"/>
<!-- task view -->
<path d="M408 740 V741.5 H420 V740 M408 755 V753.5 H420 V755 M409.5 743.5 H418.5 V751.5 H409.5 Z" fill="none" stroke="#fff" stroke-width="1.2"/>
<rect x="422" y="740" width="1.5" height="2.5" fill="#fff"/><rect x="421.5" y="744" width="2.5" height="2.5" fill="#fff"/><rect x="422" y="748" width="1.5" height="7" fill="#fff"/>
<!-- mail -->
<path d="M452 743 L464 736.5 L476.3 743 V759 H452 Z" fill="#1c72c4"/>
<path d="M452 743 H476.3 V759 H452 Z" fill="#2aa3ef"/>
<path d="M452 743 H476.3 L464 750.5 Z" fill="#eef6ff"/>
<path d="M452 759 L464 750.5 L476.3 759 Z" fill="#1a8ae0" opacity="0.6"/>
<!-- edge -->
<circle cx="507" cy="747.7" r="12.3" fill="#1a79d2"/>
<path d="M495 749 Q496 736 507.5 735.5 Q518.5 735.5 519.5 746 Q519 751 513.5 751 Q509 751 509 748 Q506 744 501 746 Q497 749 499 755 Q496 752 495 749Z" fill="#4bd07a"/>
<path d="M497 750 Q498 741 506 741 Q512 742 512.5 746 L509 748 Q505 744.5 501 747 Z" fill="#2cb5e8"/>
<path d="M499 755 Q503 760 510 759.5 Q501 757 501.5 749.5 Q498 751 499 755Z" fill="#1159a8"/>
<rect x="490" y="766" width="34" height="2" fill="#76b9ed"/>
<!-- explorer -->
<path d="M539 739.5 H546 L548 741.5 H560.5 V756 H539 Z" fill="#e8b43c"/>
<path d="M539 743.5 H560.5 V756 H539 Z" fill="#fbd16a"/>
<path d="M543.5 756.5 V748.5 H556 V756.5 H552.5 V752 H547 V756.5 Z" fill="#3a8ee0"/>
<!-- chrome -->
<circle cx="592.7" cy="747.6" r="12.2" fill="#e44134"/>
<path d="M592.7 747.6 L582.1 741.5 A12.2 12.2 0 0 0 586.6 758.2 Z" fill="#2ea64d"/>
<path d="M592.7 747.6 L586.6 758.2 A12.2 12.2 0 0 0 604.9 747.6 H592.7Z" fill="#2ea64d"/>
<path d="M592.7 747.6 L604.9 747.6 A12.2 12.2 0 0 1 592.6 759.8 L598.8 747.6 Z" fill="#fcc934"/>
<path d="M598.8 742 H604 A12.2 12.2 0 0 1 592.7 759.8 L598.8 749 Z" fill="#fcc934"/>
<circle cx="592.7" cy="747.6" r="5.5" fill="#fff"/>
<circle cx="592.7" cy="747.6" r="4.3" fill="#3b7de8"/>
<!-- tiktok -->
<circle cx="636" cy="747.6" r="12" fill="#010101"/>
<path d="M637.5 740 V751 Q637.5 755 633.5 755 Q630 755 630 751.5 Q630 748 634 748 M637.5 740 Q638 744 642 744.5" fill="none" stroke="#25f4ee" stroke-width="2" transform="translate(-0.8,-0.6)"/>
<path d="M637.5 740 V751 Q637.5 755 633.5 755 Q630 755 630 751.5 Q630 748 634 748 M637.5 740 Q638 744 642 744.5" fill="none" stroke="#fe2c55" stroke-width="2" transform="translate(0.8,0.6)"/>
<path d="M637.5 740 V751 Q637.5 755 633.5 755 Q630 755 630 751.5 Q630 748 634 748 M637.5 740 Q638 744 642 744.5" fill="none" stroke="#fff" stroke-width="1.8"/>
<!-- zoom -->
<rect x="667.5" y="736.2" width="22.5" height="22.8" rx="6" fill="#4a8cff"/>
<rect x="672" y="743.5" width="10" height="8" rx="1.8" fill="#fff"/>
<path d="M682.5 745.5 L686 743.2 V751.8 L682.5 749.5Z" fill="#fff"/>
<!-- word -->
<rect x="719" y="738.5" width="14" height="19.5" fill="#fff"/>
<path d="M721 741 H731 M721 743.5 H731 M721 746 H731 M721 748.5 H731 M721 751 H731 M721 753.5 H731" stroke="#2b579a" stroke-width="1"/>
<path d="M710.5 739.5 L723.5 736.5 V759 L710.5 756.5 Z" fill="#2b579a"/>
<text x="712" y="752" font-family="Liberation Sans" font-size="10" font-weight="bold" fill="#fff">W</text>
<!-- ppt -->
<rect x="762" y="738.5" width="14" height="19.5" fill="#fff"/>
<path d="M769 742 V747 H774 A5 5 0 0 0 769 742Z" fill="#d24726"/>
<path d="M764 750.5 H774 M764 753 H774" stroke="#d24726" stroke-width="1"/>
<path d="M753.5 739.5 L766.5 736.5 V759 L753.5 756.5 Z" fill="#d24726"/>
<text x="756" y="752" font-family="Liberation Sans" font-size="10" font-weight="bold" fill="#fff">P</text>
<!-- spotify -->
<circle cx="808" cy="747.5" r="12" fill="#1ed760"/>
<path d="M800 744 Q808 740.5 816.5 744.5 M801 747.8 Q808 745 815.5 748.5 M802 751.2 Q808 749 814 751.8" fill="none" stroke="#111" stroke-width="1.9" stroke-linecap="round"/>
<!-- settings -->
<g transform="translate(850.8,747.8)" fill="#fff">
<circle r="6.2" fill="none" stroke="#fff" stroke-width="3.2"/>
<rect x="-1.8" y="-9" width="3.6" height="18"/>
<rect x="-1.8" y="-9" width="3.6" height="18" transform="rotate(45)"/>
<rect x="-1.8" y="-9" width="3.6" height="18" transform="rotate(90)"/>
<rect x="-1.8" y="-9" width="3.6" height="18" transform="rotate(135)"/>
<circle r="4.4" fill="#37342e"/>
</g>
<!-- ae -->
<rect x="882.5" y="737" width="21" height="20" fill="#1f0040" stroke="#cf96fd" stroke-width="1.2"/>
<text x="885.3" y="751" font-family="Liberation Sans" font-size="13" font-weight="bold" fill="#cf96fd" letter-spacing="-0.5">Ae</text>
<!-- filmora -->
<rect x="925" y="737.5" width="20.5" height="21" rx="4" fill="#1b3c4e"/>
<path d="M925 753 H945.5 V754.5 Q945.5 758.5 941.5 758.5 H929 Q925 758.5 925 754.5Z" fill="#fff"/>
<path d="M929.8 749.5 L936.5 743.5 L939.5 746.5 L932.8 752.5Z" fill="#3ee0c0"/>
<path d="M930.5 741.8 L933.2 739.2 L935.8 741.8 L933.2 744.4Z" fill="#fff"/>
<rect x="932.5" y="754.8" width="5" height="1.6" fill="#1b3c4e"/>
<!-- vs -->
<path d="M965 744 L969.5 741.5 V755 L965 752.5 Z" fill="#7a4fc4"/>
<path d="M965.5 750.5 L969.5 755 L984.5 739.5 L980 736.5 Z" fill="#8656d2"/>
<path d="M965.5 746 L969.5 741.5 L984.5 757 L980 760 Z" fill="#a474e6"/>
<path d="M982.5 736 L989 739.5 V756.5 L982.5 760 Z" fill="#c49af2"/>
<rect x="961" y="766" width="24" height="2" fill="#76b9ed"/>
<rect x="986" y="766" width="8" height="2" fill="#5d8fb4"/>
<!-- active form app -->
<rect x="999" y="728" width="41" height="40" fill="#55544d"/>
<rect x="999" y="766" width="41" height="2" fill="#76b9ed"/>
<rect x="1018.2" y="737.8" width="11.6" height="11.6" fill="#3a3a3a" stroke="#e8e8e8" stroke-width="1.6"/>
<rect x="1008.8" y="745" width="6.4" height="11" fill="#3a3a3a" stroke="#e8e8e8" stroke-width="1.6"/>
<rect x="1018.2" y="751" width="8" height="5.5" fill="#3a3a3a" stroke="#e8e8e8" stroke-width="1.6"/>
<!-- weather -->
<circle cx="1078.5" cy="747.5" r="9.8" fill="#f29a1c"/>
<circle cx="1076" cy="744" r="6" fill="#f8c040" opacity="0.7"/>
<path d="M1066 745 Q1066 741 1070 741.5 Q1071 737.5 1075 738.5 Q1078.5 738.5 1078.5 742 Q1081 742 1081 745 Z" fill="#c8d8ec"/>
<path d="M1076 757.5 Q1076 753.5 1080 754 Q1081 750 1085 751 Q1088.5 751 1088.5 754.5 Q1090.5 754.5 1090.5 757.5 Z" fill="#c8d8ec"/>
<!-- tray -->
<path d="M1153 751 L1159.2 744.7 L1165.4 751" fill="none" stroke="#fff" stroke-width="1.2"/>
<path d="M1175 745 H1178 L1182 741.5 V754 L1178 750.5 H1175 Z" fill="none" stroke="#fff" stroke-width="1.1"/>
<path d="M1184.5 745 Q1186 747.7 1184.5 750.5 M1187 743 Q1189.5 747.7 1187 752.5 M1189.5 741 Q1193 747.7 1189.5 754.5" fill="none" stroke="#ccc" stroke-width="0.9"/>
<rect x="1200.5" y="744.5" width="13" height="8" fill="none" stroke="#fff" stroke-width="1.1"/>
<rect x="1202.3" y="746.3" width="6.5" height="4.4" fill="#fff"/>
<rect x="1214" y="746.5" width="1.5" height="4" fill="#fff"/>
<path d="M1226.5 754.5 Q1227 744 1238 742.5 M1229 754.5 Q1229.5 747 1237 745.5 M1231.5 754.5 Q1232 749.5 1236.5 748.5" fill="none" stroke="#ccc" stroke-width="0.9"/>
<circle cx="1236" cy="753" r="1.6" fill="#fff"/>
<!-- notification -->
<path d="M1325.5 740 H1345.5 V752 H1331 L1327.5 755.5 V752 H1325.5 Z" fill="#fff"/>
<path d="M1328.5 743.5 H1342.5 M1328.5 746 H1342.5 M1328.5 748.5 H1339" stroke="#1c1c28" stroke-width="1"/>
<circle cx="1340.4" cy="755.2" r="7.6" fill="#2a2a2a" stroke="#8a8a8a" stroke-width="1"/>
<rect x="1361" y="728" width="1" height="40" fill="#555"/>
</svg>
<div class="t" style="left:88px;top:740px;color:#1a1a1a;font-size:14.5px;line-height:16px">Escribe aquí para buscar</div>
<div class="t" style="left:1098px;top:740px;color:#fff;font-size:14px;line-height:16px">19°C</div>
<div class="t" style="left:1250px;top:732px;color:#fff;font-size:12px;letter-spacing:-0.1px">09:08 a. m.</div>
<div class="t" style="left:1249px;top:750px;color:#fff;font-size:12px;letter-spacing:0.2px">20/03/2024</div>
<div class="t" style="left:1337px;top:749px;color:#fff;font-size:11px">2</div>

</div>

<!-- ===== FORM1 WINDOW ===== -->
<div id="form1">
<div class="a" style="left:60px;top:53px;width:800px;height:480px;background:#fff;box-shadow:0 0 0 1px rgba(0,0,0,0.55),0 0 4px 1px rgba(0,0,0,0.25)"></div>
<div class="a" style="left:61px;top:83px;width:798px;height:449px;background:#f0f0f0"></div>
<svg style="left:70px;top:61px" width="13" height="12" viewBox="0 0 13 12"><rect x="5" y="0" width="7" height="7" fill="#3c3c3c"/><rect x="0" y="4" width="4" height="6" fill="#3c3c3c"/><rect x="5" y="8" width="5" height="3" fill="#3c3c3c"/></svg>
<div class="t" style="left:89px;top:61px;color:#000">Form1</div>
<div class="a" style="left:741px;top:67px;width:10px;height:1px;background:#000"></div>
<div class="a" style="left:786px;top:62px;width:10px;height:10px;border:1px solid #000"></div>
<svg style="left:832px;top:62px" width="10" height="10" viewBox="0 0 10 10"><path d="M0 0 L10 10 M10 0 L0 10" stroke="#000" stroke-width="1"/></svg>
<div class="t" style="left:311px;top:238px;color:#000">Radio</div>
<div class="a" style="left:281px;top:255px;width:100px;height:23px;background:#fff;border:1px solid #7a7a7a"></div>
<div class="t" style="left:284px;top:259px;color:#000">3.1416</div>
<div class="a" style="left:438px;top:255px;width:73px;height:21px;background:#e1e1e1;border:2px solid #0078d7"></div>
<div class="t" style="left:452px;top:259px;color:#000">Calcular</div>
<div class="t" style="left:591px;top:201px;color:#000">Area</div>
<div class="a" style="left:554px;top:218px;width:100px;height:23px;background:#fff;border:1px solid #7a7a7a"></div>
<div class="t" style="left:557px;top:222px;color:#000;letter-spacing:-0.3px">31.006494199296</div>
<div class="t" style="left:584px;top:259px;color:#000">Perimetro</div>
<div class="a" style="left:554px;top:284px;width:100px;height:23px;background:#fff;border:1px solid #7a7a7a"></div>
<div class="t" style="left:557px;top:288px;color:#000;letter-spacing:-0.4px">19.73930112</div>
</div>

</body></html>
